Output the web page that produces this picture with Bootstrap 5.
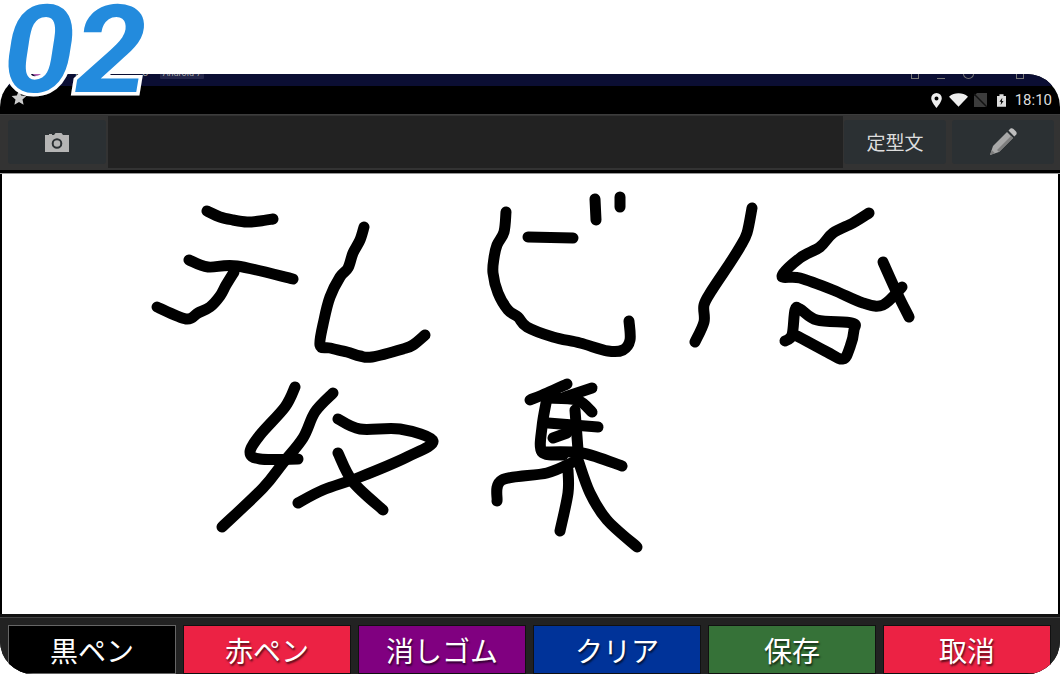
<!DOCTYPE html>
<html lang="ja">
<head>
<meta charset="utf-8">
<title>手書きメモ</title>
<link href="https://cdn.jsdelivr.net/npm/bootstrap@5.3.0/dist/css/bootstrap.min.css" rel="stylesheet">
<style>
html,body{margin:0;height:674px;overflow:hidden;background:#fff;font-family:"Noto Sans CJK JP","Noto Sans",sans-serif}
.step-num{position:absolute;left:3px;top:-19px;z-index:5;font:italic 700 122px/1.15 Roboto,"Liberation Sans",sans-serif;color:#238bdd;-webkit-text-stroke:7px #fff;paint-order:stroke fill;transform:scaleX(1.06);transform-origin:left top}
.phone{margin-top:74px;height:600px;border-radius:33px;overflow:hidden;background:#000}
.top-strip{height:12px;background:#0b0e33;overflow:hidden;position:relative;color:#999;font:11px/1 Roboto,sans-serif}
.strip-item{position:absolute;top:-7px}
.strip-dot{position:absolute;left:33px;top:-3px;width:10px;height:5px;border-radius:50%;background:#b060b0}
.strip-badge{position:absolute;left:160px;top:-6px;width:44px;height:11px;background:#24264a;color:#aaa;font-size:9px;line-height:11px;text-align:center;border-radius:1px}
.strip-box{position:absolute;top:-5px;width:8px;height:10px;border:1px solid #777}
.status-bar{height:28px;padding:0 8px 0 11px}
.status-bar svg{display:block}
.star-icon{margin-top:-4px}
.icon-pin{margin-right:7px}.icon-wifi{margin-right:6px}.icon-sim{margin-right:10px}.icon-bat{margin-right:9px}
.clock{font:15px/1 Roboto,sans-serif;color:#ddd}
.tool-bar{height:56px;background:#333;border-top:1px solid #3c3c3c}
.tool-cell{height:100%;padding:5px 1px 4px 8px}
.tool-cell-end{padding:5px 6px 4px 1px}
.tool-fill{background:#222;height:52px;margin:1px 0 0 1px}
.tool-btn{background:#2b3033;border:0;border-radius:3px;height:44px;padding:0;color:#ddd;font-size:19px;display:flex;align-items:center;justify-content:center}
.tool-btn:hover{background:#2b3033;color:#ddd}
.cam-btn{width:98px}
.word-btn{width:102px}
.pencil-btn{width:102px;margin-left:6px}
.bar-gap{height:4px;background:#000;border-bottom:1px solid #999}
.draw-area{height:440px;margin:0 2px;background:#fff;display:block;width:1056px}
.pen-bar{height:60px;border-top:3px solid #111;box-shadow:inset 0 1px #444;background:#222;padding:8px 9px 0 8px;gap:7px}
.pen-btn{flex:1 1 0;height:49px;border-radius:0;border:1px solid #111;color:#fff;font-size:28px;line-height:1;padding:0;text-shadow:1px 2px 2px rgba(0,0,0,.65);display:flex;align-items:center;justify-content:center}
.pen-btn:hover{color:#fff}
.pen-black{background:#000;border-color:#666}.pen-black:hover{background:#000;border-color:#666}
.pen-red{background:#ec2244}.pen-red:hover{background:#ec2244;border-color:#111}
.pen-purple{background:#800080}.pen-purple:hover{background:#800080;border-color:#111}
.pen-blue{background:#003399}.pen-blue:hover{background:#003399;border-color:#111}
.pen-green{background:#367238}.pen-green:hover{background:#367238;border-color:#111}
.ink{fill:none;stroke:#000;stroke-width:11;stroke-linecap:round;stroke-linejoin:round}
.ink polyline,.ink path{fill:none}
</style>
</head>
<body class="position-relative">
<div class="step-num">02</div>
<div class="phone d-flex flex-column">
  <div class="top-strip">
    <span class="strip-dot"></span>
    <span class="strip-item" style="left:73px">19</span>
    <span class="strip-item" style="left:142px">5</span>
    <span class="strip-badge">Android 7</span>
    <span class="strip-box" style="left:911px"></span>
    <span class="strip-box" style="left:937px;border-width:0 0 1px"></span>
    <span class="strip-box" style="left:963px;border-radius:50%;width:11px"></span>
    <span class="strip-box" style="left:1016px"></span>
  </div>
  <div class="status-bar d-flex align-items-center">
    <svg class="star-icon" width="16" height="16" viewBox="0 0 16 16"><path fill="#ccc" d="M8 .6l2.200 4.800 5.200.6-3.900 3.500 1.100 5.200L8 12.100l-4.600 2.600 1.100-5.200L.6 6l5.200-.6z"/></svg>
    <div class="d-flex align-items-center ms-auto">
      <svg class="icon-pin" width="11" height="15" viewBox="0 0 11 15"><path fill="#eee" fill-rule="evenodd" d="M5.500 0a5.300 5.300 0 0 1 5.300 5.300C10.800 9 5.500 15 5.500 15S.2 9 .2 5.300A5.300 5.300 0 0 1 5.500 0zm0 3.400a2 2 0 1 0 0 4 2 2 0 0 0 0-4z"/></svg>
      <svg class="icon-wifi" width="19" height="14" viewBox="0 0 20 14"><path fill="#eee" d="M10 14L0 3.500C3 1 6.300 0 10 0s7 1 10 3.500z"/></svg>
      <svg class="icon-sim" width="13" height="14" viewBox="0 0 13 14"><path fill="#3c3c3c" d="M0 14V3l3-3h10v14z"/><path stroke="#111" stroke-width="1.500" d="M0 1l13 13"/></svg>
      <svg class="icon-bat" width="9" height="15" viewBox="0 0 11 15"><path fill="#ddd" d="M3 0h5v2h3v13H0V2h3z"/><path fill="#111" d="M6.500 4L3 9h2l-.5 4L8 8H6z"/></svg>
      <span class="clock">18:10</span>
    </div>
  </div>
  <div class="tool-bar d-flex">
    <div class="tool-cell">
      <button class="btn tool-btn cam-btn" aria-label="カメラ">
        <svg width="24" height="19" viewBox="0 0 24 19"><path fill="#b5b5b5" fill-rule="evenodd" d="M1 2h3V1h3v1h2l1.500-2h6L18 2h6v17H0V2zm11 3.200a5.300 5.300 0 1 0 0 10.600 5.300 5.300 0 0 0 0-10.600zm0 2a3.300 3.300 0 1 1 0 6.600 3.300 3.300 0 0 1 0-6.600z"/></svg>
      </button>
    </div>
    <div class="tool-fill flex-grow-1"></div>
    <div class="tool-cell tool-cell-end d-flex">
      <button class="btn tool-btn word-btn">定型文</button>
      <button class="btn tool-btn pencil-btn" aria-label="ペン">
        <svg width="28" height="28" viewBox="0 0 28 28"><path fill="#a8a8a8" d="M1 27l3-9L18 4l6 6-14 14z"/><path fill="#7d7d7d" d="M1 27l1.700-5 3.300 3.300zM8 22L22 8l2 2-14 14z"/><path fill="#bdbdbd" d="M19.500 2.500l2-2c1-.6 2-.4 3 .5l2.500 2.500c.8 1 .9 2 .3 3l-2 2z"/></svg>
      </button>
    </div>
  </div>
  <div class="bar-gap"></div>
  <svg class="draw-area" viewBox="2 174 1056 440" role="img" aria-label="手書き">
    <g class="ink">
      <polyline points="207,211 220,217 233,220 247,222 260,221 273,219"/>
      <polyline points="189,260 208,267 237,266 293,279"/>
      <polyline points="234,272 226,285 220,296 210,307 198,313 186,319 157,307"/>
      <polyline points="364,227 360,240 353,253 348,268 340,277 330,297 324,320 320,345 330,348 347,352 360,356 372,357 403,349 413,345 425,335"/>
      <polyline points="506,212 504,232 497,245 494,258 493,273 498,293 508,310 518,317 527,327 553,337 580,343 608,351 623,350 630,340 629,321"/>
      <polyline points="528,237 573,238"/>
      <polyline points="595,199 596,220"/>
      <polyline points="620,197 620,207"/>
      <polyline points="752,208 747,233 740,247 730,263 712,290 704,305 704,322 695,342"/>
      <polyline points="869,213 853,223 833,233 820,247 800,258 782,276 800,278 833,290 863,303 883,305 902,287"/>
      <polyline points="883,262 897,293 909,317"/>
      <polyline points="785,341 792,335 795,310 800,309 817,320 852,323 854,330 850,347 843,359 827,352 797,336 792,335"/>
      <polyline points="295,387 285,407 260,435 250,452 260,459 298,459"/>
      <polyline points="333,393 315,412 303,438 283,463 263,488 222,527"/>
      <polyline points="338,419 360,429 400,429 433,441 407,457 360,477 323,490 298,503"/>
      <polyline points="338,453 353,482 383,510"/>
      <polyline points="567,384 547,393 530,400"/>
      <polyline points="548,398 577,400 592,412"/>
      <polyline points="592,388 565,397"/>
      <polyline points="547,398 542,427 542,452 563,455"/>
      <polyline points="548,423 598,427"/>
      <polyline points="553,438 567,433"/>
      <polyline points="575,410 578,450"/>
      <polyline points="542,452 582,453 622,466"/>
      <polyline points="497,501 502,480 547,473 573,462"/>
      <polyline points="568,470 568,493 560,531"/>
      <polyline points="578,460 590,493 607,520 637,547"/>
    </g>
  </svg>
  <div class="pen-bar d-flex">
    <button class="btn pen-btn pen-black">黒ペン</button>
    <button class="btn pen-btn pen-red">赤ペン</button>
    <button class="btn pen-btn pen-purple">消しゴム</button>
    <button class="btn pen-btn pen-blue">クリア</button>
    <button class="btn pen-btn pen-green">保存</button>
    <button class="btn pen-btn pen-red">取消</button>
  </div>
</div>
<script src="https://cdn.jsdelivr.net/npm/bootstrap@5.3.0/dist/js/bootstrap.bundle.min.js"></script>
<script>
document.querySelectorAll('.ink polyline').forEach(function(pl){
  var p=pl.getAttribute('points').trim().split(/\s+/).map(function(s){return s.split(',').map(Number)});
  var d='M'+p[0].join(' ');
  for(var i=0;i<p.length-1;i++){
    var a=p[Math.max(i-1,0)],b=p[i],c=p[i+1],e=p[Math.min(i+2,p.length-1)];
    d+=' C'+(b[0]+(c[0]-a[0])/6)+' '+(b[1]+(c[1]-a[1])/6)+' '+(c[0]-(e[0]-b[0])/6)+' '+(c[1]-(e[1]-b[1])/6)+' '+c[0]+' '+c[1];
  }
  var n=document.createElementNS('http://www.w3.org/2000/svg','path');
  n.setAttribute('d',d);pl.replaceWith(n);
});
</script>
</body>
</html>
